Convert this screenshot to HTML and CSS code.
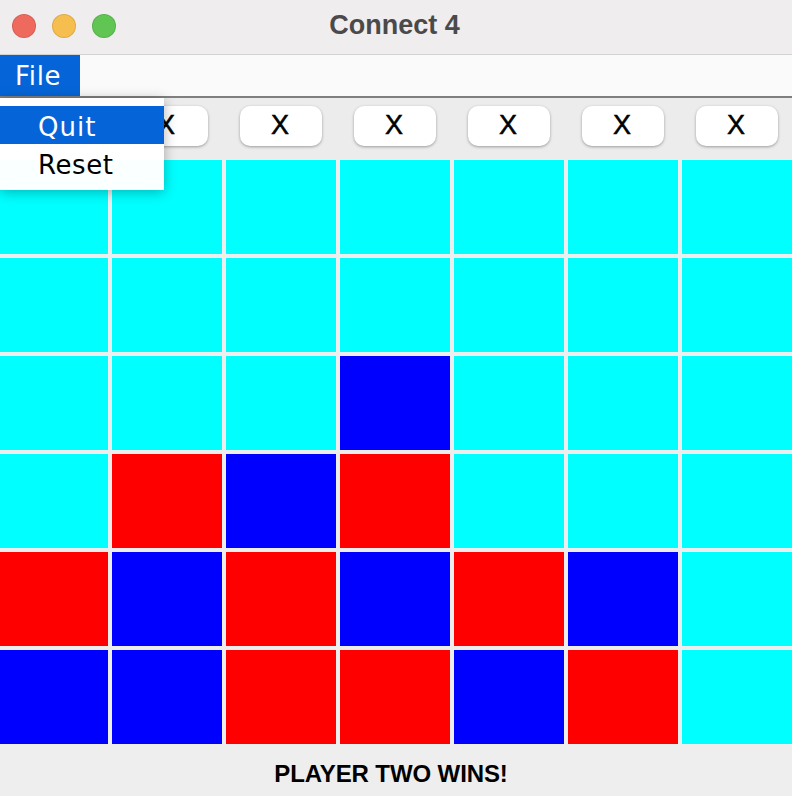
FILE: index.html
```html
<!DOCTYPE html>
<html>
<head>
  <meta charset="utf-8">
  <meta name="viewport" content="width=device-width">
  <title>Connect 4</title>
  <link rel="stylesheet" href="styles.css">
</head>
<body>
  <div class="window">
    <div class="titlebar">
      <div class="lights">
        <span class="light close"></span>
        <span class="light min"></span>
        <span class="light zoom"></span>
      </div>
      <div class="title">Connect 4</div>
    </div>
    <div class="menubar">
      <div class="menu-file">File</div>
    </div>
    <div class="popup">
      <div class="popup-item active">Quit</div>
      <div class="popup-item">Reset</div>
    </div>
    <div class="buttons">
      <button class="drop">X</button>
      <button class="drop">X</button>
      <button class="drop">X</button>
      <button class="drop">X</button>
      <button class="drop">X</button>
      <button class="drop">X</button>
      <button class="drop">X</button>
    </div>
    <div class="board">
      <div class="cell"></div><div class="cell"></div><div class="cell"></div><div class="cell"></div><div class="cell"></div><div class="cell"></div><div class="cell"></div>
      <div class="cell"></div><div class="cell"></div><div class="cell"></div><div class="cell"></div><div class="cell"></div><div class="cell"></div><div class="cell"></div>
      <div class="cell"></div><div class="cell"></div><div class="cell"></div><div class="cell two"></div><div class="cell"></div><div class="cell"></div><div class="cell"></div>
      <div class="cell"></div><div class="cell one"></div><div class="cell two"></div><div class="cell one"></div><div class="cell"></div><div class="cell"></div><div class="cell"></div>
      <div class="cell one"></div><div class="cell two"></div><div class="cell one"></div><div class="cell two"></div><div class="cell one"></div><div class="cell two"></div><div class="cell"></div>
      <div class="cell two"></div><div class="cell two"></div><div class="cell one"></div><div class="cell one"></div><div class="cell two"></div><div class="cell one"></div><div class="cell"></div>
    </div>
    <div class="status">PLAYER TWO WINS!</div>
  </div>
</body>
</html>
```

FILE: styles.css
```css
html, body {
  margin: 0;
  height: 100%;
}

.window {
  position: relative;
  width: 792px;
  height: 796px;
  overflow: hidden;
  background-color: #eeeeee;
}

.titlebar {
  position: relative;
  display: flex;
  align-items: center;
  justify-content: center;
  height: 54px;
  background-color: #efedee;
  border-bottom: 1px solid #d3d2d2;
}

.lights {
  position: absolute;
  left: 12px;
  top: 14px;
  display: flex;
  gap: 16px;
}

.light {
  width: 22px;
  height: 22px;
  border-radius: 50%;
  border: 1px solid rgba(0, 0, 0, 0.1);
}

.close { background-color: #ee6a5f; }
.min { background-color: #f6be4f; }
.zoom { background-color: #61c554; }

.title {
  margin: -3px 3px 0 0;
  font-family: "Liberation Sans", sans-serif;
  font-weight: bold;
  font-size: 27px;
  color: #4b4a4a;
}

.menubar {
  display: flex;
  height: 41px;
  background-color: #fafafa;
  border-bottom: 2px solid #7f7f7f;
}

.menu-file {
  display: flex;
  align-items: center;
  width: 80px;
  padding-left: 15px;
  box-sizing: border-box;
  background-color: #0565d8;
  color: #fff;
  font-family: "DejaVu Sans", sans-serif;
  font-size: 26px;
  letter-spacing: 0.7px;
}

.popup {
  position: absolute;
  left: 0;
  top: 98px;
  width: 164px;
  height: 92px;
  padding-top: 8px;
  box-sizing: border-box;
  background-color: rgba(255, 255, 255, 0.98);
  box-shadow: 0 2px 12px rgba(0, 0, 0, 0.3);
  font-family: "DejaVu Sans", sans-serif;
  font-size: 26px;
  letter-spacing: 0.6px;
  color: #000;
}

.popup-item {
  display: flex;
  align-items: center;
  height: 38px;
  padding: 4px 0 0 38px;
  box-sizing: border-box;
}

.popup-item.active {
  background-color: #0565d8;
  color: #fff;
  letter-spacing: 1px;
}

.buttons {
  display: flex;
  gap: 32px;
  height: 62px;
  padding: 8px 0 0 12px;
  box-sizing: border-box;
  background-color: #ececec;
}

.drop {
  width: 82px;
  height: 40px;
  padding: 0 2px 2px 0;
  border: none;
  border-radius: 10px;
  background-color: #fff;
  box-shadow: 0 1px 3px rgba(0, 0, 0, 0.35);
  font-family: "Liberation Sans", sans-serif;
  font-size: 27px;
  color: #000;
  -webkit-text-stroke: 0.5px #000;
}

.board {
  display: grid;
  grid-template-columns: 108px repeat(6, 110px);
  grid-auto-rows: 94px;
  gap: 4px;
  background-color: #eeeeee;
}

.cell { background-color: #00ffff; }
.cell.one { background-color: #ff0000; }
.cell.two { background-color: #0000ff; }

.status {
  height: 52px;
  padding-right: 10px;
  box-sizing: border-box;
  line-height: 60px;
  text-align: center;
  font-family: "Liberation Sans", sans-serif;
  font-weight: bold;
  font-size: 24px;
  letter-spacing: -0.1px;
  color: #000;
}
```
